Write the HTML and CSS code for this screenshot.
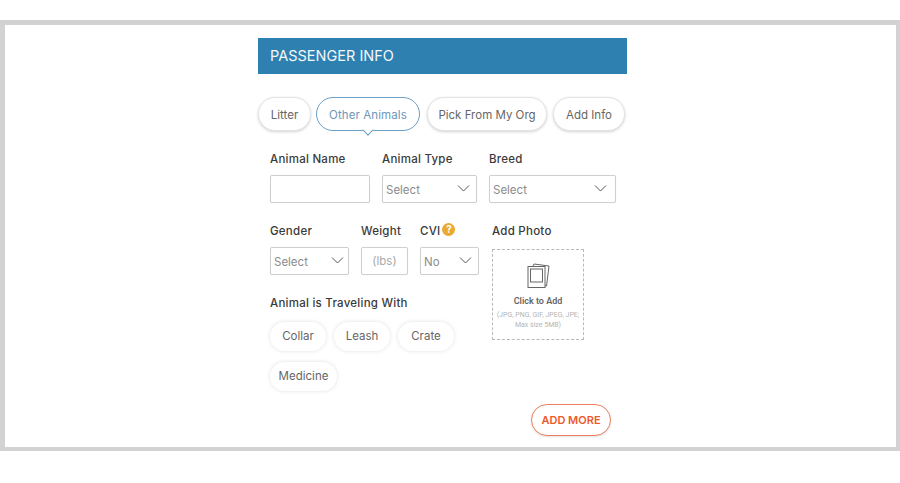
FILE: index.html
```html
<!DOCTYPE html>
<html lang="en">
<head>
<meta charset="utf-8">
<title>Passenger Info</title>
<link rel="stylesheet" href="styles.css">
</head>
<body>
<main class="frame">
  <section class="panel">
    <h1 class="title">PASSENGER INFO</h1>
    <nav class="tabs">
      <button class="tab tab-litter">Litter</button>
      <button class="tab tab-other active">Other Animals</button>
      <button class="tab tab-pick">Pick From My Org</button>
      <button class="tab tab-add">Add Info</button>
    </nav>
    <div class="form">
      <div class="row row-one">
        <div class="field f-name"><div class="label">Animal Name</div><div class="control"></div></div>
        <div class="field f-type"><div class="label">Animal Type</div>
          <div class="control select"><span>Select</span><svg class="chev" viewBox="0 0 12 7"><path d="M.5.5 6 6 11.500.5"/></svg></div></div>
        <div class="field f-breed"><div class="label">Breed</div>
          <div class="control select"><span>Select</span><svg class="chev" viewBox="0 0 12 7"><path d="M.5.5 6 6 11.500.5"/></svg></div></div>
      </div>
      <div class="lower">
        <div class="left">
          <div class="row">
            <div class="field f-gender"><div class="label">Gender</div>
              <div class="control select"><span>Select</span><svg class="chev" viewBox="0 0 12 7"><path d="M.5.5 6 6 11.500.5"/></svg></div></div>
            <div class="field f-weight"><div class="label">Weight</div>
              <div class="control unit">(lbs)</div></div>
            <div class="field f-cvi"><div class="label cvi-label">CVI<span class="help">?</span></div>
              <div class="control select"><span>No</span><svg class="chev" viewBox="0 0 12 7"><path d="M.5.5 6 6 11.500.5"/></svg></div></div>
          </div>
          <div class="label travel">Animal is Traveling With</div>
          <div class="chips">
            <span class="chip c-collar">Collar</span>
            <span class="chip c-leash">Leash</span>
            <span class="chip c-crate">Crate</span>
            <span class="chip c-med">Medicine</span>
          </div>
        </div>
        <div class="photo">
          <div class="label">Add Photo</div>
          <div class="drop">
            <svg class="pic" viewBox="0 0 28 28">
              <path d="M9 4 10 2 25 4 22.500 24 20.500 23.700"/>
              <rect x="4" y="4.500" width="17" height="21"/>
              <rect x="6.500" y="7" width="12" height="13"/>
            </svg>
            <div class="click">Click to Add</div>
            <div class="hint">(JPG, PNG, GIF, JPEG, JPE;<br>Max size 5MB)</div>
          </div>
        </div>
      </div>
      <div class="actions"><button class="more">ADD MORE</button></div>
    </div>
  </section>
</main>
</body>
</html>
```
FILE: styles.css
```css
* { box-sizing: border-box; }
html, body { margin: 0; padding: 0; background: #fff; }
body { height: 483px; overflow: hidden; padding-top: 20px; font-family: "Inter", "Liberation Sans", sans-serif; }
.frame { height: 431px; border: solid #d2d2d2; border-width: 5px 4px 4px 5px; background: #fff; padding: 13px 0 0 253px; }
.panel { width: 369px; }
.title { margin: 0; height: 36px; line-height: 36px; padding-left: 12px; background: #2e80b1; color: #f4f8fb; font-size: 14.500px; font-weight: 400; }
.tabs { display: flex; margin-top: 23px; }
.tab { height: 34px; padding: 1px 0 0; border: 1px solid #e4e4e4; border-radius: 17px; background: #fff; color: #666; font: 400 11.500px "Inter", sans-serif; box-shadow: 0 1px 3px rgba(0,0,0,.18); position: relative; }
.tab-litter { width: 53px; }
.tab-other { width: 104px; margin-left: 5px; letter-spacing: .1px; }
.tab-pick { width: 120px; margin-left: 7px; }
.tab-add { width: 72px; margin-left: 6px; }
.tab.active { border-color: #6a9fc6; color: #6f97b8; box-shadow: none; }
.tab.active::after { content: ""; position: absolute; left: 47px; bottom: -4px; width: 7px; height: 7px; background: #fff; border: solid #6a9fc6; border-width: 0 1px 1px 0; transform: rotate(45deg); }
.form { padding: 21px 0 0 12px; }
.row { display: flex; gap: 12px; }
.row-one { height: 72px; }
.label { height: 23px; font-size: 11.500px; line-height: 14px; font-weight: 500; color: #3a3a3a; letter-spacing: .25px; }
.cvi-label { display: flex; align-items: flex-start; }
.control { height: 28px; border: 1px solid #cfcfcf; border-radius: 2px; background: #fff; box-shadow: 0 0 1px rgba(0,0,0,.1); }
.select { display: flex; align-items: center; justify-content: space-between; padding: 1px 6px 0 3px; font-size: 11.500px; color: #8b8b8b; }
.chev { width: 13px; height: 7px; margin-bottom: 3px; fill: none; stroke: #555; stroke-width: 1; }
.f-name { width: 100px; }
.f-type { width: 95px; }
.f-breed { width: 127px; }
.f-breed .select { padding-right: 8px; }
.lower { display: flex; }
.left { width: 222px; }
.f-gender { width: 79px; }
.f-gender .select { padding-right: 4px; }
.f-weight { width: 47px; }
.f-cvi { width: 59px; }
.left .row .label { height: 23px; }
.unit { display: flex; align-items: center; justify-content: center; font-size: 11.500px; color: #a8a8a8; }
.help { width: 13px; height: 13px; margin: -1px 0 0 2px; border-radius: 50%; background: #eaa92f; color: #fff; font-size: 10px; font-weight: 700; line-height: 13px; text-align: center; letter-spacing: 0; }
.travel { margin-top: 21px; height: 26px; }
.chips { display: flex; flex-wrap: wrap; gap: 11px 8px; }
.chip { height: 29px; line-height: 28px; border-radius: 15px; background: #fff; text-align: center; font-size: 11.500px; color: #666; box-shadow: 0 0 4px rgba(0,0,0,.12); }
.c-collar, .c-leash, .c-crate { width: 56px; }
.c-med { width: 67px; }
.photo { width: 92px; }
.photo .label { height: 25px; }
.drop { height: 91px; border: 1px dashed #b8b8b8; display: flex; flex-direction: column; align-items: center; padding-top: 12px; color: #666; }
.pic { width: 28px; height: 28px; fill: #fff; stroke: #666; stroke-width: 1; }
.click { margin-top: 6px; font-size: 9px; font-weight: 600; font-family: "Roboto", sans-serif; line-height: 11px; }
.hint { margin-top: 3px; font-size: 7px; line-height: 10px; color: #b5b5b5; text-align: center; font-family: "Roboto", sans-serif; white-space: nowrap; }
.actions { display: flex; justify-content: flex-end; padding-right: 16px; margin-top: 13px; }
.more { width: 80px; height: 32px; padding: 0; border: 1px solid #ef7f5c; border-radius: 16px; background: #fff; color: #f0592b; font: 600 11px "Inter", sans-serif; box-shadow: 0 1px 2px rgba(0,0,0,.12); }
```
